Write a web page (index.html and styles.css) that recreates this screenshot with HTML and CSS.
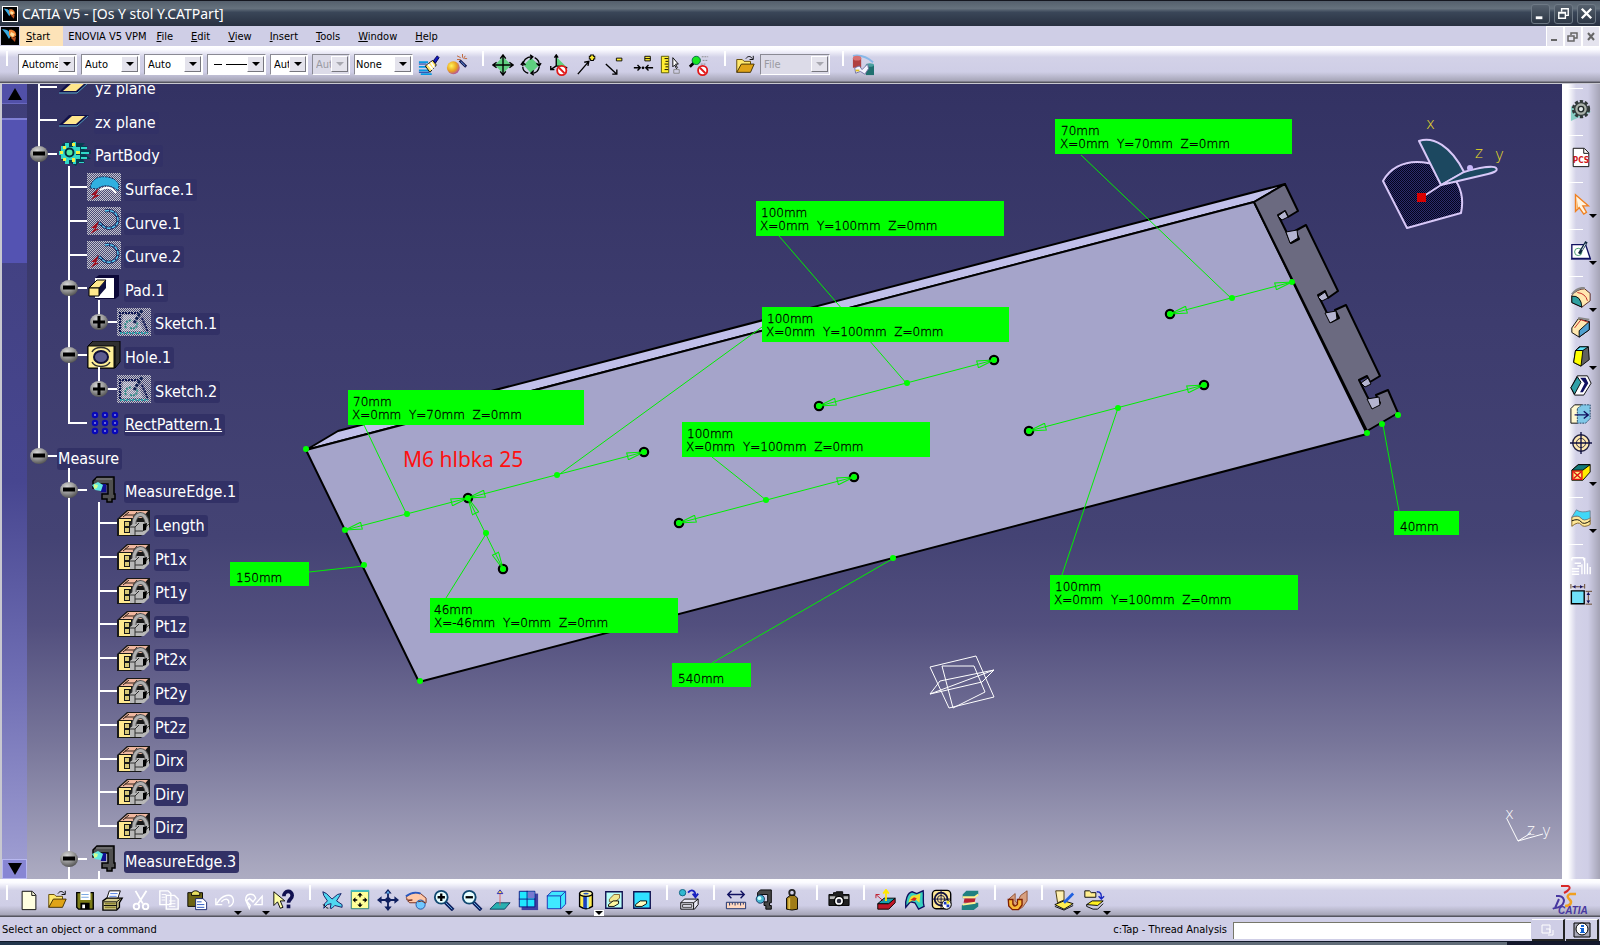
FILE: index.html
```html
<!DOCTYPE html>
<html lang="en">
<head>
<meta charset="utf-8">
<title>CATIA V5 - [Os Y stol Y.CATPart]</title>
<link rel="stylesheet" href="styles.css">
</head>
<body>
<svg class="defs" aria-hidden="true">
  <defs>
    <radialGradient id="ball" cx=".4" cy=".3" r=".75"><stop offset="0" stop-color="#d8d8d8"/><stop offset=".5" stop-color="#9a9a9a"/><stop offset="1" stop-color="#4c4c4c"/></radialGradient>
    <radialGradient id="gold" cx=".35" cy=".35" r=".7"><stop offset="0" stop-color="#fff45a"/><stop offset=".6" stop-color="#e8a020"/><stop offset="1" stop-color="#b050a0"/></radialGradient>
    <pattern id="dots" width="2" height="2" patternUnits="userSpaceOnUse"><rect width="2" height="2" fill="#4b4b78"/><path d="M0 0h1v1H0zM1 1h1v1H1z" fill="#c4c4cc"/></pattern>
    <pattern id="dark" width="2" height="2" patternUnits="userSpaceOnUse"><rect width="2" height="2" fill="#2c2c6c"/><path d="M0 0h1v1H0zM1 1h1v1H1z" fill="#04041c"/></pattern>
  </defs>
  <symbol id="app" viewBox="0 0 18 18"><path fill="#000" d="M0 0h18v18H0z"/><path d="M1 2l5 1 5 4-3 5-3-5z" fill="#38a8e0"/><path d="M8 3c4-1 8 2 7 6l-4 2-3-3z" fill="#f08030"/><path d="M10 5l4 2-2 3-3-2z" fill="#ffe0a0"/><path d="M10 11l5-1-1 5z" fill="#b85020"/></symbol>
  <symbol id="minus" viewBox="0 0 20 18"><ellipse cx="10" cy="9" rx="9" ry="8" fill="url(#ball)"/><path d="M4 6.500h12v4H4z" fill="#000"/></symbol>
  <symbol id="plus" viewBox="0 0 20 18"><ellipse cx="10" cy="9" rx="9" ry="8" fill="url(#ball)"/><path d="M4 7.500h12v3H4zM8.500 3h3v12h-3z" fill="#000"/></symbol>

  <symbol id="t-plane" viewBox="0 0 34 28"><path d="M2 19L12 9h20L21 19z" fill="#101048"/><path d="M6 18l9-8h13l-9 8z" fill="#ffe68c"/><path d="M2 20h18L31 10" fill="none" stroke="#50a0c0"/></symbol>
  <symbol id="t-body" viewBox="0 0 34 28"><path d="M5 4l5-2 3 1 3-3 4 3h8l-3 3h6l-4 4h8v4h-7l6 5h-8l2 4h-7l-2 3-5-3-5 1-2-3-3-2 2-4-3-4 3-3z" fill="#063c50"/><path d="M4 6h4V3h4v4h4V2h3v5h4v4h-4v4h4v4h-4v5h-3v-4h-4v4H8v-5H4v-4H2v-4h2zM24 7h6v2h-6zM24 12h8v2h-8zM24 17h6v2h-6zM22 22h5v1h-5z" fill="#30d8c8"/><path d="M6 6h3v3H6zM15 3h3v3h-3zM3 11h3v3H3zM19 11h4v3h-4zM6 18h3v3H6zM15 18h3v4h-3z" fill="#f0f040"/><circle cx="12.500" cy="12.500" r="4" fill="#50e8a0" stroke="#003040" stroke-width="2"/></symbol>
  <symbol id="t-surface" viewBox="0 0 34 28"><path d="M0 0h34v28H0z" fill="url(#dots)"/><path d="M3 15C5 5 12 3 20 4s11 5 12 8l-1 6c-6-6-15-7-21-2z" fill="#30b0e0" stroke="#103060" stroke-dasharray="2 1"/><path d="M13 17q7-4 12-1l4 4" fill="none" stroke="#fff" stroke-width="2"/><path d="M12 15L4 22h4l-4 5 9-5H9z" fill="#a01020"/></symbol>
  <symbol id="t-curve" viewBox="0 0 34 28"><path d="M0 0h34v28H0z" fill="url(#dots)"/><path d="M18 4c9-2 13 4 13 9s-5 9-11 8-5-6-10-5" fill="none" stroke="#101850" stroke-width="3"/><path d="M18 4c9-2 13 4 13 9s-5 9-11 8-5-6-10-5" fill="none" stroke="#58c8f0" stroke-width="1.500" stroke-dasharray="4 1"/><path d="M12 14L4 21h4l-5 6 9-5H9z" fill="#a01020"/></symbol>
  <symbol id="t-pad" viewBox="0 0 34 28"><path d="M8 4l4-3h20v21l-4 3H8z" fill="#0c0838"/><path d="M8 4h19v20H8z" fill="#fff"/><path d="M2 14l8-8h9l-7 8z" fill="#ffe88c" stroke="#000"/><path d="M12 14l7-8v8l-7 8z" fill="#101040"/><path d="M2 14h10v8H2z" fill="#ffe88c" stroke="#000"/></symbol>
  <symbol id="t-sketch" viewBox="0 0 34 28"><path d="M0 0h34v28H0z" fill="url(#dots)"/><path d="M3 24V5h18M25 10l6 14" fill="none" stroke="#0c1450" stroke-width="2" stroke-dasharray="2 1"/><path d="M6 7h14l6 16H5z" fill="#fff" opacity=".35"/><path d="M3 25h28" stroke="#30a0a8" stroke-width="2" stroke-dasharray="2 1"/><path d="M9 20c-3-5 3-9 6-7M13 20c6 2 8-3 7-6" fill="none" stroke="#308c88" stroke-width="2" stroke-dasharray="2 1"/><path d="M17 15L25 2" stroke="#102050" stroke-width="3" stroke-dasharray="3 1"/></symbol>
  <symbol id="t-hole" viewBox="0 0 34 28"><path d="M1 5l5-5h27v21l-5 6H1z" fill="#303030" stroke="#000"/><path d="M28 5v22" stroke="#000"/><path d="M1 5h26v22H1z" fill="#fff098" stroke="#000"/><ellipse cx="14" cy="16" rx="7" ry="6" fill="#5c5c90" stroke="#101038" stroke-width="2"/><path d="M5 11c3-6 15-6 18 0M5 21c3 6 15 6 18 0" fill="none" stroke="#303030" stroke-width="1.500"/></symbol>
  <symbol id="t-pattern" viewBox="0 0 34 28"><g fill="#fff" stroke="#0808b8" stroke-width="2.500"><circle cx="8" cy="6" r="2"/><circle cx="18" cy="6" r="2"/><circle cx="28" cy="6" r="2"/><circle cx="8" cy="14" r="2"/><circle cx="18" cy="14" r="2"/><circle cx="28" cy="14" r="2"/><circle cx="8" cy="22" r="2"/><circle cx="18" cy="22" r="2"/><circle cx="28" cy="22" r="2"/></g></symbol>
  <symbol id="t-clamp" viewBox="0 0 34 28"><path d="M6 5l4-4h17v17h1v5h-3v3h-5v-3h-5v-5h6V8H10v4H6z" fill="#505050" stroke="#000" stroke-width="1.500"/><path d="M9 3h16" stroke="#888"/><path d="M12 8h7v8h-5z" fill="#101090"/><path d="M5 9l6-3 5 3-2 6-6-1z" fill="#60e8e0"/><path d="M7 8l4 1-1 3-3 1z" fill="#d0ff90"/></symbol>
  <symbol id="t-lock" viewBox="0 0 34 28"><path d="M0 10L10 1h23v17L24 27H0z" fill="#181818"/><path d="M3 9l8-7h20l-6 7z" fill="#f0b8a0"/><path d="M8 6h14M12 3l-6 5M20 3l-4 5" stroke="#302018"/><path d="M2 10h12v2H7v12h7v2H2z" fill="#ffe890"/><path d="M8 13h4v4H8zM8 19h4v4H8z" fill="#d8c878"/><path d="M13 17l5-4h14v8l-5 5H13z" fill="#b8b8b8"/><path d="M13 18h5v8M18 18l4-4M26 20l6-5M18 22h8" fill="none" stroke="#303030"/><path d="M17 15c0-12 12-13 13-1" fill="none" stroke="#555" stroke-width="5"/><path d="M17 15c0-12 12-13 13-1" fill="none" stroke="#b0b0b0" stroke-width="3"/><path d="M26 15l4-1-1 7-3 1z" fill="#000"/></symbol>

  <symbol id="brush" viewBox="0 0 24 24"><path d="M1 9h10M1 14h9M1 18h12M3 22h12" stroke="#0898e0" stroke-width="2"/><path d="M1 11h8M1 20h11" stroke="#0830a0"/><path d="M8 13l8-6 4 5-7 8z" fill="#ffe46a" stroke="#000"/><path d="M11 11l5 6M14 9l4 6" stroke="#fff" stroke-width="2"/><path d="M17 7l4-5 2 2-4 6z" fill="#1018c0" stroke="#000048"/></symbol>
  <symbol id="wand" viewBox="0 0 24 24"><circle cx="8" cy="15" r="7" fill="url(#gold)"/><path d="M15 7l7 7" stroke="#101048" stroke-width="3"/><path d="M16 8l5 5" stroke="#70b0ff"/><path d="M12 2l4 2M18 0v4M21 2l-2 3M12 6h4M23 5h-3" stroke="#c06030"/></symbol>
  <symbol id="move" viewBox="0 0 24 24"><path d="M12 3l9 9-9 9-9-9z" fill="#5fd07f"/><path d="M12 1v22M1 12h22M9 5l3-4 3 4M9 19l3 4 3-4M5 9l-4 3 4 3M19 9l4 3-4 3" fill="none" stroke="#000" stroke-width="1.500"/></symbol>
  <symbol id="rot" viewBox="0 0 24 24"><path d="M12 4l9 8-9 9-8-9z" fill="#5fd07f"/><path d="M3 13C3 7 7 3 13 3M11 1l3 2-3 3M16 4c4 2 5 4 5 8M18 10l3 3 2-3M21 14c-1 5-4 7-8 7M15 18l-3 3 3 2M9 21c-4-1-6-4-6-7M1 12l2-3 3 3" fill="none" stroke="#000" stroke-width="1.500"/></symbol>
  <symbol id="axisno" viewBox="0 0 24 24"><path d="M9 3v10l12 2z" fill="#5fd07f"/><path d="M9 13V1M7 4l2-3 2 3M9 13l12 2M9 13l-6 4M3 13v4h4" fill="none" stroke="#000" stroke-width="1.500"/><circle cx="15" cy="18" r="5" fill="#fff" stroke="#e01818" stroke-width="2"/><path d="M12 15l6 6" stroke="#e01818" stroke-width="2"/></symbol>
  <symbol id="arrp" viewBox="0 0 24 24"><path d="M2 22L14 8M9 9l5-1-1 5" fill="none" stroke="#000" stroke-width="1.500"/><path d="M14 4h7M17.500 .5v7" stroke="#000" stroke-width="4"/><path d="M15 4h5M17.500 1.500v5" stroke="#ffee30" stroke-width="2"/></symbol>
  <symbol id="arrm" viewBox="0 0 24 24"><path d="M2 11l12 11M14 17v5H9" fill="none" stroke="#000" stroke-width="1.500"/><path d="M13.500 4.500h6v3h-6z" fill="#ffee30" stroke="#000"/></symbol>
  <symbol id="arre" viewBox="0 0 24 24"><path d="M2 15h7M15 15h8M6 12l3 3-3 3M18 12l-3 3 3 3" fill="none" stroke="#000" stroke-width="1.500"/><circle cx="12" cy="15" r="1.500"/><path d="M14 2.500h6v5h-6z" fill="#ffee30" stroke="#000"/><path d="M14 5h6" stroke="#000"/></symbol>
  <symbol id="ruler" viewBox="0 0 24 24"><path d="M1.500 2.500h8v18h-8z" fill="#ffee30" stroke="#555500"/><path d="M5 5h4M6 8h3M5 11h4M6 14h3M5 17h4" stroke="#000"/><path d="M14 4v10l2-2 2 4 1-1-2-4h3z" fill="#fff" stroke="#000"/><path d="M15 17h6v4h-6z" fill="none" stroke="#888"/></symbol>
  <symbol id="magno" viewBox="0 0 24 24"><path d="M2 14l5-5" stroke="#000" stroke-width="3"/><circle cx="9" cy="7" r="4.500" fill="#18e820" stroke="#064"/><path d="M15 3h7M16 7h5M14 11h5" stroke="#888" stroke-dasharray="2 1"/><circle cx="16" cy="18" r="5" fill="#fff" stroke="#e01818" stroke-width="2"/><path d="M13 15l6 6" stroke="#e01818" stroke-width="2"/></symbol>
  <symbol id="open" viewBox="0 0 24 24"><path d="M3 20V6h6l2 2h7v4" fill="#ffe86c" stroke="#5c4400"/><path d="M3 20l5-9h14l-4 9z" fill="#e0a418" stroke="#3c2c00"/><path d="M13 5c2-3 5-3 7 0M21 2v4h-4" fill="none" stroke="#000"/></symbol>
  <symbol id="people" viewBox="0 0 24 24"><path d="M1 2q12-2 22 7" stroke="#88b8e8" fill="none" stroke-width="2"/><path d="M1 4h9v11H1z" fill="#b04040"/><ellipse cx="5.500" cy="4.500" rx="4.500" ry="2.500" fill="#d87070"/><path d="M15 12h9v11h-9z" fill="#207070"/><ellipse cx="19.500" cy="12" rx="4.500" ry="2" fill="#48a0a0"/><path d="M3 15l5-2 3 4 6-6 1 5-4 6-5-3-5 2z" fill="#f4f4ff" stroke="#7070a0"/><path d="M4 17h4v2H4z" fill="#e0c020"/></symbol>

  <symbol id="new" viewBox="0 0 24 24"><path d="M4.500 2.500h11l4 4v16h-15z" fill="#ffffe0" stroke="#000"/><path d="M15 3v4h4" fill="none" stroke="#000"/></symbol>
  <symbol id="save" viewBox="0 0 24 24"><path d="M3 4h18v18H5l-2-2z" fill="#7c7c18" stroke="#000" stroke-width="1.500"/><path d="M7 3h11v9H7z" fill="#fff"/><path d="M8 6h8M8 9h8" stroke="#70a0e0"/><path d="M7 15h10v7H7z" fill="#000"/><path d="M9 17h3v4H9z" fill="#fff"/></symbol>
  <symbol id="print" viewBox="0 0 24 24"><path d="M8 2h12l-3 9H5z" fill="#fff" stroke="#000"/><path d="M9 5h8M8 8h8" stroke="#4878e0"/><path d="M1 13l4-3h17l-3 5v5l-3 3H1z" fill="#d8d090" stroke="#000" stroke-width="1.500"/><path d="M2 14h14l4-3M2 18h14M16 14v8" fill="none" stroke="#000"/><path d="M3 16h12M3 20h12" stroke="#8c8430" stroke-width="2"/></symbol>
  <symbol id="cut" viewBox="0 0 24 24"><path d="M6 2l8 14M18 2L9 16" stroke="#fff" stroke-width="2"/><circle cx="7" cy="19" r="3" fill="none" stroke="#fff" stroke-width="2"/><circle cx="17" cy="19" r="3" fill="none" stroke="#fff" stroke-width="2"/></symbol>
  <symbol id="copy" viewBox="0 0 24 24"><path d="M2 2h9l3 3v12H2zM9 7h9l4 4v11H9z" fill="#d4d3e8" stroke="#fff" stroke-width="1.500"/><path d="M4 6h5M4 9h4M4 12h4M12 13h7M12 16h7M12 19h7" stroke="#fff"/></symbol>
  <symbol id="paste" viewBox="0 0 24 24"><path d="M2 4h16v15H2z" fill="#6c6414" stroke="#000"/><path d="M6 5c1-4 8-4 9 0v2H6z" fill="#e8e060" stroke="#000"/><path d="M10.500 10.500h8l4 4v8h-12z" fill="#fff" stroke="#102068"/><path d="M12 14h5M12 17h8M12 20h8" stroke="#2050c0"/></symbol>
  <symbol id="undo" viewBox="0 0 24 24"><path d="M2 10v7h7M3 16c6-10 16-12 18-5 1 4-2 8-5 8M8 14c5-5 9-3 8 2" fill="none" stroke="#fff" stroke-width="1.500"/></symbol>
  <symbol id="redo" viewBox="0 0 24 24"><path d="M22 8v9h-8zM4 12c0-8 9-8 11-2l-3 4-4-4-3 3 4 5-1 3z" fill="none" stroke="#fff" stroke-width="1.500"/></symbol>
  <symbol id="help" viewBox="0 0 24 24"><path d="M2 3v15l4-4 3 7 3-1-3-7h5z" fill="#ffffa8" stroke="#000"/><path d="M13 8c0-7 9-7 9-1 0 4-4 4-4 8" fill="none" stroke="#101050" stroke-width="4"/><path d="M16 17h4v4h-4z" fill="#101050"/></symbol>
  <symbol id="fly" viewBox="0 0 24 24"><path d="M2 3l4 2 6 6 6-5 4-1-5 8 6 4v3l-8-2-3 3h-2l1-5-4 1-4 4 1-5 3-3-4-6z" fill="#50d8f0" stroke="#101860"/><path d="M2 17c3 1 3 4 6 4" fill="none" stroke="#000"/></symbol>
  <symbol id="fit" viewBox="0 0 24 24"><path d="M2.500 2.500h19v19h-19z" fill="#ffff98" stroke="#207878"/><path d="M2 2h20" stroke="#40c0c0" stroke-width="2"/><path d="M12 6v3M12 15v3M6 12h3M15 12h3" stroke="#000" stroke-width="1.500"/><path d="M12 4l-3 3h6zM12 20l-3-3h6zM4 12l3-3v6zM20 12l-3-3v6z"/></symbol>
  <symbol id="pan" viewBox="0 0 24 24"><path d="M12 4v16M4 12h16" stroke="#102060" stroke-width="2"/><circle cx="12" cy="12" r="3" fill="#102060"/><path d="M12 0L8 5h8zM12 24l-4-5h8zM0 12l5-4v8zM24 12l-5-4v8z" fill="#102060"/><path d="M12 2l-2 3h4z" fill="#60b0f0"/></symbol>
  <symbol id="spin" viewBox="0 0 24 24"><path d="M1 9c5-5 11-6 16-4l6 5v5l-6 3-4-3H5l-2-2 5-1H2v-2z" fill="#ffc8a8" stroke="#702818"/><path d="M1 8c5-4 11-5 16-3" fill="none" stroke="#2858c0" stroke-width="2"/><circle cx="17" cy="17" r="5" fill="#70c8ff" stroke="#2050a0"/><path d="M14 14q4-2 8 1" stroke="#702818" fill="none"/></symbol>
  <symbol id="zin" viewBox="0 0 24 24"><path d="M13 14l9 9" stroke="#102060" stroke-width="4"/><path d="M14 15l7 7" stroke="#70c0f0"/><circle cx="9" cy="9" r="7" fill="#e8ffff" stroke="#104870" stroke-width="2"/><path d="M5 9h8M9 5v8" stroke="#000" stroke-width="2.500"/></symbol>
  <symbol id="zout" viewBox="0 0 24 24"><path d="M13 14l9 9" stroke="#102060" stroke-width="4"/><path d="M14 15l7 7" stroke="#70c0f0"/><circle cx="9" cy="9" r="7" fill="#e8ffff" stroke="#104870" stroke-width="2"/><path d="M5 9h8" stroke="#000" stroke-width="2.500"/></symbol>
  <symbol id="normal" viewBox="0 0 24 24"><path d="M1 22l7-7h15l-6 7z" fill="#28b0b0" stroke="#104060"/><path d="M12 18V5" stroke="#e06060"/><path d="M12 1l-3 4h6z" fill="#ffe040" stroke="#2020c0"/></symbol>
  <symbol id="views" viewBox="0 0 24 24"><path d="M5 5h18v18H5z" fill="#4040a0"/><path d="M2.500 2.500h17v17h-17z" fill="#20e8ff" stroke="#101080"/><path d="M11 2v18M2 11h18" stroke="#101080"/><path d="M12 3h7v7h-7z" fill="#7878d0"/></symbol>
  <symbol id="cube" viewBox="0 0 24 24"><path d="M2.500 7.500l5-5h15v14l-5 5h-15z" fill="#40e8ff" stroke="#1828b0"/><path d="M2 7.500h15v14M17 8l5-5" fill="none" stroke="#1828b0"/></symbol>
  <symbol id="cyl" viewBox="0 0 24 24"><path d="M5 5v14q7 5 14 0V5z" fill="#ffee50" stroke="#000" stroke-width="1.500"/><path d="M9 7v14h4V7z" fill="#1840c0"/><path d="M13 8v13h2V8z" fill="#a0e8ff"/><ellipse cx="12" cy="5" rx="7" ry="3" fill="#fff8a0" stroke="#000" stroke-width="1.500"/><ellipse cx="12" cy="5" rx="3" ry="1" fill="#2050c0"/></symbol>
  <symbol id="hide" viewBox="0 0 24 24"><path d="M3 3h18v18H3z" fill="#b8fff8" stroke="#101050" stroke-width="1.500"/><path d="M7 11l5-5h6v4l-5 4H7z" fill="#f0e890" stroke="#806030"/><path d="M6 17l5-4h6v3l-5 3H6z" fill="#fff8a0" stroke="#000"/></symbol>
  <symbol id="swap" viewBox="0 0 24 24"><path d="M3 3h18v18H3z" fill="#30e0ff" stroke="#101050" stroke-width="1.500"/><path d="M5 17l5-4h7v3l-5 3H5z" fill="#ffffc0" stroke="#000"/></symbol>
  <symbol id="tree" viewBox="0 0 24 24"><circle cx="5" cy="4" r="3.500" fill="#30b8d0" stroke="#106080"/><path d="M11 4c3-4 8-3 8 3M16 5l3 4 3-4" fill="none" stroke="#1820c0" stroke-width="2"/><path d="M3 15l4-4h15v6l-4 5H3zM3 15h14v7M17 15l5-4" fill="#e8e8f4" stroke="#000"/><path d="M5 17h10v3H5z" fill="none" stroke="#333"/></symbol>
  <symbol id="meas" viewBox="0 0 24 24"><path d="M3 6h18M7 2L3 6l4 4M17 2l4 4-4 4" fill="none" stroke="#101060" stroke-width="1.500"/><path d="M1.500 14.500h21v7h-21z" fill="#ffd8c0" stroke="#102868"/><path d="M5 15v3M8 15v2M11 15v3M14 15v2M17 15v3M20 15v2" stroke="#102868"/></symbol>
  <symbol id="item" viewBox="0 0 24 24"><path d="M5 4l3-3h12v14h-2v3h2v4h-6v-4h-2v-4h4V6H8v3H5z" fill="#484848" stroke="#000"/><circle cx="8" cy="11" r="4.500" fill="#48b8d0" stroke="#103060"/><circle cx="7" cy="10" r="2" fill="#d0ffff"/></symbol>
  <symbol id="mass" viewBox="0 0 24 24"><circle cx="12" cy="4" r="3" fill="none" stroke="#222" stroke-width="2"/><path d="M6 10l4-3h5l3 3v12q-6 2-12 0z" fill="#a07c18" stroke="#000"/><path d="M9 10v12" stroke="#e0c050" stroke-width="2"/></symbol>
  <symbol id="cam" viewBox="0 0 24 24"><path d="M1 6h5V4h3V3h7v3h7v12H1z" fill="#202020" stroke="#000"/><path d="M2 8h6v3H2zM17 8h5v3h-5z" fill="#b8b8b8"/><circle cx="12" cy="13" r="5" fill="#fff" stroke="#000" stroke-width="1.500"/><circle cx="12" cy="13" r="2.500" fill="#303040"/></symbol>
  <symbol id="draft" viewBox="0 0 24 24"><path d="M3 16h11l8-6v5l-7 7H3z" fill="#c01828" stroke="#000"/><path d="M3 16l7-6h12l-7 6z" fill="#18a0b0" stroke="#000"/><path d="M12 13V2M9 5l3-4 3 4" stroke="#ffe800" stroke-width="2" fill="none"/><path d="M9 13L1 6M1 10V6h4" stroke="#c01828" fill="none"/></symbol>
  <symbol id="curv" viewBox="0 0 24 24"><path d="M3 20C2 12 5 4 10 3l5 2 7-3c1 8-1 12 1 17l-6 3-4-7-5-1z" fill="#38d0c0" stroke="#101060" stroke-width="1.500"/><path d="M6 15c1-6 4-9 7-8l6-2-1 10-5-4z" fill="#f0e030"/><path d="M8 12l4-3 3 1-2 3z" fill="#e02818"/></symbol>
  <symbol id="tap" viewBox="0 0 24 24"><rect x="1.500" y="1.500" width="20" height="20" rx="4" fill="#ffe898" stroke="#000" stroke-width="1.500"/><circle cx="11" cy="11" r="7" fill="none" stroke="#101040" stroke-width="2"/><circle cx="11" cy="11" r="4" fill="none" stroke="#101040"/><path d="M11 1v20M1 11h20" stroke="#101040"/><circle cx="17" cy="17" r="5" fill="#fff" stroke="#000"/><path d="M14 14h3v3h-3zM17 17h3v3h-3z" fill="#1838c0"/><path d="M17 13h3v3h-3z" fill="#e8e020"/></symbol>
  <symbol id="wall" viewBox="0 0 24 24"><path d="M4 6l4-4h13v4l-4 4H4zM3 18l4-3h14v4l-5 4H3z" fill="#208080"/><path d="M6 10h12l-1 5H5z" fill="#b82030"/><path d="M4 9h13l4-3M4 17l14-2" stroke="#fff090" fill="none" stroke-width="2"/></symbol>
  <symbol id="slice" viewBox="0 0 24 24"><path d="M3 11l7-6v8l2 2 4-8 7-5v11l-5 7-4 2z" fill="#d8a080" stroke="#905030"/><path d="M2.500 11.500h5v5q2 4 5 0v-5h5v6l-4 5H7l-4-4z" fill="#f8b838" stroke="#802000" stroke-width="1.500"/></symbol>
  <symbol id="cat1" viewBox="0 0 24 24"><path d="M3 2h9v10l-7 3z" fill="#fff0b0" stroke="#403000"/><path d="M2 17l10-4 10 3-10 6z" fill="#ffee50" stroke="#000"/><path d="M2 19l10 4 10-5" stroke="#000" fill="none"/><path d="M12 15l10-10" stroke="#2060e0" stroke-width="3"/></symbol>
  <symbol id="cat2" viewBox="0 0 24 24"><path d="M2 9V2h5l2 2h5v5z" fill="#ffee90" stroke="#000"/><path d="M15 3c5 0 5 3 5 7M17 8l3 3 3-3" fill="none" stroke="#1828c0" stroke-width="1.500"/><path d="M4 17l6-4h12l-6 5z" fill="#fff020" stroke="#000"/><path d="M4 17v2l7 3h5l6-6" fill="none" stroke="#000"/></symbol>

  <symbol id="gear" viewBox="0 0 24 24"><path d="M1 8v16l22-10z" fill="#70c8b8" opacity=".8"/><circle cx="12" cy="11" r="8.500" fill="none" stroke="#303838" stroke-width="3" stroke-dasharray="3.500 2"/><circle cx="12" cy="11" r="7" fill="#a8b0a8" stroke="#303838" stroke-width="1.500"/><circle cx="12" cy="11" r="3" fill="#e0e8e8" stroke="#202828" stroke-width="1.500"/></symbol>
  <symbol id="pcs" viewBox="0 0 24 24"><path d="M3.500 2.500h12l5 5v15h-17z" fill="#fff" stroke="#000"/><path d="M15 3v5h5" fill="none" stroke="#000"/><text x="12" y="18" text-anchor="middle" class="pcs">PCS</text></symbol>
  <symbol id="select" viewBox="0 0 24 24"><path d="M6 2v18l4-4 5 7 3-2-4-7h6z" fill="#fff4e0" stroke="#f08020" stroke-width="1.500"/><path d="M7 4v14l2-2z" fill="#f8b060"/></symbol>
  <symbol id="skt" viewBox="0 0 24 24"><path d="M22 20L17 5H2v15z" fill="#fff" stroke="#101060" stroke-width="1.500"/><path d="M1 21h22" stroke="#101060"/><circle cx="9" cy="13" r="4" fill="none" stroke="#409868"/><path d="M10 15l8-13" stroke="#102840" stroke-width="3"/><path d="M13 11l4-7" stroke="#e8f8ff"/></symbol>
  <symbol id="fillet" viewBox="0 0 24 24"><path d="M2 9q6-7 14-7l6 5v8l-9 7L2 17z" fill="#ffe8b0" stroke="#502020"/><path d="M2 10q10-1 11 12L2 17z" fill="#30a0a0" stroke="#000"/><path d="M2 8Q8 0 16 1" stroke="#888" stroke-width="2" fill="none"/><path d="M8 6q9 1 11 9" fill="none" stroke="#c02020"/></symbol>
  <symbol id="chamf" viewBox="0 0 24 24"><path d="M2 13l7-10 12 3v9l-11 8-8-5z" fill="#ffe8b0" stroke="#000"/><path d="M21 6L10 16v7l11-8z" fill="#50a0d0" stroke="#000"/><path d="M5 13L12 4l8 3" fill="none" stroke="#c02020"/><path d="M9 2l12 2" stroke="#888" stroke-width="2"/></symbol>
  <symbol id="drafta" viewBox="0 0 24 24"><path d="M6 6l4-4h10l1 14-9 7-8-4z" fill="#606060" stroke="#000"/><path d="M6 6h8l-2 17-8-4z" fill="#ffff00" stroke="#000"/><path d="M6 6l5-4h9l-6 4z" fill="#60e0f8" stroke="#000"/></symbol>
  <symbol id="shell" viewBox="0 0 24 24"><path d="M8 2h11l4 8-8 13H5l-4-8z" fill="#fff" stroke="#000"/><path d="M8 3L1 15l4 7 7-13z" fill="#30a0a8" stroke="#000"/><path d="M11 4h6l3 6-6 10h-3l5-10z" fill="#101060"/></symbol>
  <symbol id="thick" viewBox="0 0 24 24"><path d="M1 6l4-4h8v16l-5 4H1z" fill="#fff8d0" stroke="#000"/><path d="M8 6l5-4h9v15l-5 5H8z" fill="#80c8e8" stroke="#204060" stroke-dasharray="2 1"/><path d="M5 13h14M15 9l5 4-5 4" fill="none" stroke="#101060" stroke-width="1.500"/></symbol>
  <symbol id="thread" viewBox="0 0 24 24"><circle cx="12" cy="12" r="9" fill="#ffe8b0" stroke="#202040" stroke-width="1.500"/><circle cx="12" cy="12" r="5" fill="none" stroke="#202040"/><path d="M12 0v24M0 12h24" stroke="#101040" stroke-width="1.500"/></symbol>
  <symbol id="remove" viewBox="0 0 24 24"><path d="M2 10l7-6h13v8l-8 9H2z" fill="#ffee00" stroke="#000"/><path d="M2 10l7-6h13l-8 6z" fill="#107878" stroke="#000"/><path d="M3 11h10v9H3z" fill="#ffee80" stroke="#e01010" stroke-width="1.500"/><path d="M4 12l8 7M12 12l-8 7" stroke="#e01010" stroke-width="1.500"/></symbol>
  <symbol id="join" viewBox="0 0 24 24"><path d="M2 10q7-3 10 1t10-1v8q-7 4-10 0t-10 2z" fill="#ffe898" stroke="#806020"/><path d="M2 10l5-8q5 4 15 1v8q-7 4-10 0t-10-1z" fill="#40d8f8" stroke="#708090"/><path d="M2 14q7-3 10 1t10-1" fill="none" stroke="#000"/></symbol>
  <symbol id="grid" viewBox="0 0 24 24"><path d="M2 3h13M2 6V3M15 3v3M2 15h8M2 18h8M2 21h8M13 21V10M16 21V3M19 21V9M22 21v-8M5 9h7M8 12h4" fill="none" stroke="#fff" stroke-width="1.500"/></symbol>
  <symbol id="dims" viewBox="0 0 24 24"><path d="M1.500 7.500h14v14h-14z" fill="#70e0f8" stroke="#000" stroke-width="1.500"/><path d="M1 0v5M16 0v5M2 3h13M17 8h7M17 22h7M20 9v12" stroke="#604020"/><path d="M3 3l3-2v4zM14 3l-3-2v4zM20 9l-2 3h4zM20 21l-2-3h4z" fill="#101060"/></symbol>
</svg>

<header class="titlebar">
  <svg class="app-ico"><use href="#app"/></svg>
  <h1>CATIA V5 - [Os Y stol Y.CATPart]</h1>
  <div class="win-btns">
    <button aria-label="Minimize"><svg viewBox="0 0 18 18"><path d="M4 12h7v3H4z" fill="#fff"/></svg></button>
    <button aria-label="Restore"><svg viewBox="0 0 18 18"><path d="M4 8h7v6H4zM7 7V4h7v7h-3M4 8.500h7" fill="none" stroke="#fff" stroke-width="1.500"/></svg></button>
    <button aria-label="Close"><svg viewBox="0 0 18 18"><path d="M4 4l10 10M14 4L4 14" stroke="#fff" stroke-width="2.500"/></svg></button>
  </div>
</header>

<nav class="menubar">
  <svg class="menu-ico"><use href="#app"/></svg>
  <button class="hot"><u>S</u>tart</button>
  <button class="wide">ENOVIA V5 VPM</button>
  <button><u>F</u>ile</button>
  <button><u>E</u>dit</button>
  <button><u>V</u>iew</button>
  <button><u>I</u>nsert</button>
  <button><u>T</u>ools</button>
  <button><u>W</u>indow</button>
  <button><u>H</u>elp</button>
  <div class="mdi">
    <button aria-label="Minimize document"><svg viewBox="0 0 16 16"><path d="M4 10h6v2H4z" fill="#666"/></svg></button>
    <button aria-label="Restore document"><svg viewBox="0 0 16 16"><path d="M3 7h6v5H3zM6 6V4h6v5H9" fill="none" stroke="#666" stroke-width="1.500"/></svg></button>
    <button aria-label="Close document"><svg viewBox="0 0 16 16"><path d="M5 4l6 7M11 4l-6 7" stroke="#666" stroke-width="2"/></svg></button>
  </div>
</nav>

<div class="toolbar top">
  <div class="group combos">
    <span class="combo"><select aria-label="Color"><option>Automatic</option></select><i></i></span>
    <span class="combo"><select aria-label="Transparency"><option>Auto</option></select><i></i></span>
    <span class="combo"><select aria-label="Weight"><option>Auto</option></select><i></i></span>
    <span class="combo"><select aria-label="Line type"><option aria-label="Dashed"></option></select><b class="dash"></b><i></i></span>
    <span class="combo slim"><select aria-label="Point symbol"><option>Auto</option></select><i></i></span>
    <span class="combo slim off"><select aria-label="Rendering" disabled><option>Auto</option></select><i></i></span>
    <span class="combo tight"><select aria-label="Layer"><option>None</option></select><i></i></span>
  </div>
  <div class="group flush">
    <button aria-label="Painter"><svg><use href="#brush"/></svg></button>
    <button aria-label="Wizard"><svg><use href="#wand"/></svg></button>
  </div>
  <div class="group">
    <button aria-label="Translate"><svg><use href="#move"/></svg></button>
    <button aria-label="Rotate"><svg><use href="#rot"/></svg></button>
    <button aria-label="No axis"><svg><use href="#axisno"/></svg></button>
    <button aria-label="Add"><svg><use href="#arrp"/></svg></button>
    <button aria-label="Remove"><svg><use href="#arrm"/></svg></button>
    <button aria-label="Equal"><svg><use href="#arre"/></svg></button>
    <button aria-label="Ruler"><svg><use href="#ruler"/></svg></button>
    <button aria-label="No snap"><svg><use href="#magno"/></svg></button>
  </div>
  <div class="group">
    <button aria-label="Open catalog"><svg><use href="#open"/></svg></button>
    <span class="combo file off"><select aria-label="File" disabled><option>File</option></select><i></i></span>
  </div>
  <div class="group">
    <button aria-label="Collaborate"><svg><use href="#people"/></svg></button>
  </div>
</div>

<main class="work">
  <div class="scroll" role="scrollbar" aria-controls="tree" aria-valuenow="5">
    <button aria-label="Scroll up"><svg viewBox="0 0 14 12"><path d="M7 0l7 12H0z"/></svg></button>
    <div class="thumb"></div>
    <button class="down" aria-label="Scroll down"><svg viewBox="0 0 14 12"><path d="M7 12L0 0h14z"/></svg></button>
  </div>
  <div class="view">
    <svg class="scene" viewBox="0 84 1562 795" preserveAspectRatio="xMidYMid meet">
      <defs>
        <marker id="arr" viewBox="0 0 24 8" refX="24" refY="4" markerWidth="24" markerHeight="8" markerUnits="userSpaceOnUse" orient="auto-start-reverse"><path d="M24 4L7 .5v7z" fill="none" stroke="#00f000"/></marker>
      </defs>
      <g stroke="#000" stroke-width="2" stroke-linejoin="round">
        <path d="M306 450L338 431 1285 184 1254 202z" fill="#c1c0ea"/>
        <path d="M306 450L1254 202 1367 434 419 682z" fill="#a5a4ca"/>
        <path d="M1254 202l31-18 13 27-10 6-3-6-7 4 8 16 5 12 8-4-4-8 11-6 32 66-10 7-3-7-7 4 8 16 5 11 8-4-4-8 11-5 34 71-10 6-3-6-8 4 8 16 6 11 7-4-4-8 12-5 10 23-31 18z" fill="#6b6a80"/>
        <g fill="#b4b4d0" stroke-width="1"><path d="M1278 216l7-5 3 6-6 3zM1286 232l11-2 1 8-8 5zM1318 297l7-5 3 6-6 3zM1325 313l11-2 1 8-7 4zM1361 383l7-5 3 6-6 3zM1367 399l12-2 1 8-8 4z"/></g>
      </g>
      <g fill="none" stroke="#000" stroke-width="2.500">
        <circle cx="468" cy="498" r="4"/><circle cx="644" cy="452" r="4"/><circle cx="503" cy="569" r="4"/>
        <circle cx="819" cy="406" r="4"/><circle cx="994" cy="360" r="4"/><circle cx="679" cy="523" r="4"/><circle cx="854" cy="477" r="4"/>
        <circle cx="1029" cy="431" r="4"/><circle cx="1204" cy="385" r="4"/><circle cx="1170" cy="314" r="4"/>
      </g>
      <g fill="none" stroke="#00f000">
        <g marker-start="url(#arr)" marker-end="url(#arr)">
          <path d="M345 530L468 498"/><path d="M468 498L644 452"/><path d="M468 498l35 71"/><path d="M819 406l175-46"/>
          <path d="M679 523l175-46"/><path d="M1029 431l175-46"/><path d="M1170 314l122-32"/>
        </g>
        <path d="M364 425l43 90M762 327L557 476M446 598l40-64M779 236l128 148M712 457l54 43M1062 575l56-167M1081 155l151 144M309 572l55-6M712 663l182-105M1399 511l-16-86"/>
      </g>
      <g fill="#00ff00">
        <circle cx="345" cy="530" r="3"/><circle cx="407" cy="514" r="3"/><circle cx="468" cy="498" r="3"/><circle cx="557" cy="475" r="3"/><circle cx="644" cy="452" r="3"/><circle cx="486" cy="533" r="3"/><circle cx="503" cy="569" r="3"/>
        <circle cx="819" cy="406" r="3"/><circle cx="907" cy="383" r="3"/><circle cx="994" cy="360" r="3"/><circle cx="679" cy="523" r="3"/><circle cx="766" cy="500" r="3"/><circle cx="854" cy="477" r="3"/>
        <circle cx="1029" cy="431" r="3"/><circle cx="1118" cy="408" r="3"/><circle cx="1204" cy="385" r="3"/><circle cx="1170" cy="314" r="3"/><circle cx="1232" cy="298" r="3"/><circle cx="1292" cy="282" r="3"/>
        <circle cx="306" cy="449" r="3"/><circle cx="420" cy="681" r="3"/><circle cx="364" cy="565" r="3"/><circle cx="893" cy="558" r="3"/><circle cx="1367" cy="433" r="3"/><circle cx="1382" cy="424" r="3"/><circle cx="1398" cy="415" r="3"/>
      </g>
      <g class="dim">
        <g><rect x="348" y="390" width="236" height="35"/><text x="353" y="406">70mm</text><text x="352" y="419">X=0mm  Y=70mm  Z=0mm</text></g>
        <g><rect x="756" y="201" width="248" height="35"/><text x="761" y="217">100mm</text><text x="760" y="230">X=0mm  Y=100mm  Z=0mm</text></g>
        <g><rect x="762" y="307" width="247" height="35"/><text x="767" y="323">100mm</text><text x="766" y="336">X=0mm  Y=100mm  Z=0mm</text></g>
        <g><rect x="682" y="422" width="248" height="35"/><text x="687" y="438">100mm</text><text x="686" y="451">X=0mm  Y=100mm  Z=0mm</text></g>
        <g><rect x="1055" y="119" width="237" height="35"/><text x="1061" y="135">70mm</text><text x="1060" y="148">X=0mm  Y=70mm  Z=0mm</text></g>
        <g><rect x="1050" y="575" width="248" height="35"/><text x="1055" y="591">100mm</text><text x="1054" y="604">X=0mm  Y=100mm  Z=0mm</text></g>
        <g><rect x="430" y="598" width="248" height="35"/><text x="434" y="614">46mm</text><text x="434" y="627">X=-46mm  Y=0mm  Z=0mm</text></g>
        <g><rect x="230" y="562" width="79" height="24"/><text x="236" y="582">150mm</text></g>
        <g><rect x="672" y="663" width="79" height="24"/><text x="678" y="683">540mm</text></g>
        <g><rect x="1394" y="511" width="65" height="24"/><text x="1400" y="531">40mm</text></g>
      </g>
      <text class="note" x="403" y="467">M6 hlbka 25</text>
      <g stroke="#d8c8f8" stroke-width="2" stroke-linejoin="round">
        <path d="M1383 181c7-13 20-19 34-19 30 0 50 22 44 51l-54 15z" fill="url(#dark)"/>
        <path d="M1441 185l-22-44c14-5 32 5 45 31z" fill="#1c4860"/>
        <path d="M1441 185l23-13c14-4 30-7 32-4 3 3-4 5-8 6z" fill="#1c4860"/>
        <path d="M1424 196l17-11"/>
      </g>
      <circle cx="1470" cy="168" r="3" fill="#c8b8f8"/>
      <path d="M1417 193h9v9h-9z" fill="#d80000"/>
      <g class="axis"><text x="1426" y="129">x</text><text x="1475" y="158">z</text><text x="1495" y="160">y</text></g>
      <g fill="none" stroke="#fff">
        <path d="M930 667l46-11 18 41-45 11zM942 666l32 0 11 26-32 16zM930 694l64-24M930 694l10-13 54-11-12 12z"/>
        <path d="M1507 819l11 22 25-7M1518 841l13-8"/>
      </g>
      <g class="axis white"><text x="1505" y="819">x</text><text x="1527" y="835">z</text><text x="1542" y="836">y</text></g>
    </svg>
    <ul class="tree" id="tree">
      <li><i class="v t"></i><svg class="ico"><use href="#t-plane"/></svg><span class="lab">yz plane</span></li>
      <li><i class="v t"></i><svg class="ico"><use href="#t-plane"/></svg><span class="lab">zx plane</span></li>
      <li class="par"><i class="v t"><svg><use href="#minus"/></svg></i><svg class="ico"><use href="#t-body"/></svg><span class="lab">PartBody</span></li>
      <li><i class="v"></i><i class="v t"></i><svg class="ico"><use href="#t-surface"/></svg><span class="lab">Surface.1</span></li>
      <li><i class="v"></i><i class="v t"></i><svg class="ico"><use href="#t-curve"/></svg><span class="lab">Curve.1</span></li>
      <li><i class="v"></i><i class="v t"></i><svg class="ico"><use href="#t-curve"/></svg><span class="lab">Curve.2</span></li>
      <li class="par two"><i class="v"></i><i class="v t"><svg><use href="#minus"/></svg></i><svg class="ico"><use href="#t-pad"/></svg><span class="lab">Pad.1</span></li>
      <li><i class="v"></i><i class="v"></i><i class="e t"><svg><use href="#plus"/></svg></i><svg class="ico"><use href="#t-sketch"/></svg><span class="lab">Sketch.1</span></li>
      <li class="par two"><i class="v"></i><i class="v t"><svg><use href="#minus"/></svg></i><svg class="ico"><use href="#t-hole"/></svg><span class="lab">Hole.1</span></li>
      <li><i class="v"></i><i class="v"></i><i class="e t"><svg><use href="#plus"/></svg></i><svg class="ico"><use href="#t-sketch"/></svg><span class="lab">Sketch.2</span></li>
      <li><i class="v"></i><i class="e t"></i><svg class="ico"><use href="#t-pattern"/></svg><span class="lab under">RectPattern.1</span></li>
      <li class="par bare"><i class="e t"><svg><use href="#minus"/></svg></i><span class="lab">Measure</span></li>
      <li class="par two"><i></i><i class="v t"><svg><use href="#minus"/></svg></i><svg class="ico"><use href="#t-clamp"/></svg><span class="lab">MeasureEdge.1</span></li>
      <li><i></i><i class="v"></i><i class="v t"></i><svg class="ico"><use href="#t-lock"/></svg><span class="lab">Length</span></li>
      <li><i></i><i class="v"></i><i class="v t"></i><svg class="ico"><use href="#t-lock"/></svg><span class="lab">Pt1x</span></li>
      <li><i></i><i class="v"></i><i class="v t"></i><svg class="ico"><use href="#t-lock"/></svg><span class="lab">Pt1y</span></li>
      <li><i></i><i class="v"></i><i class="v t"></i><svg class="ico"><use href="#t-lock"/></svg><span class="lab">Pt1z</span></li>
      <li><i></i><i class="v"></i><i class="v t"></i><svg class="ico"><use href="#t-lock"/></svg><span class="lab">Pt2x</span></li>
      <li><i></i><i class="v"></i><i class="v t"></i><svg class="ico"><use href="#t-lock"/></svg><span class="lab">Pt2y</span></li>
      <li><i></i><i class="v"></i><i class="v t"></i><svg class="ico"><use href="#t-lock"/></svg><span class="lab">Pt2z</span></li>
      <li><i></i><i class="v"></i><i class="v t"></i><svg class="ico"><use href="#t-lock"/></svg><span class="lab">Dirx</span></li>
      <li><i></i><i class="v"></i><i class="v t"></i><svg class="ico"><use href="#t-lock"/></svg><span class="lab">Diry</span></li>
      <li><i></i><i class="v"></i><i class="e t"></i><svg class="ico"><use href="#t-lock"/></svg><span class="lab">Dirz</span></li>
      <li class="par two"><i></i><i class="v t"><svg><use href="#minus"/></svg></i><svg class="ico"><use href="#t-clamp"/></svg><span class="lab">MeasureEdge.3</span></li>
      <li><i></i><i class="v"></i><i class="v t"></i><svg class="ico"><use href="#t-lock"/></svg></li>
    </ul>
  </div>
  <aside class="side">
    <div class="vgroup"><button aria-label="Part Design"><svg><use href="#gear"/></svg></button></div>
    <div class="vgroup"><button aria-label="PCS"><svg><use href="#pcs"/></svg></button></div>
    <div class="vgroup"><button class="drop" aria-label="Select"><svg><use href="#select"/></svg></button></div>
    <div class="vgroup"><button class="drop" aria-label="Sketcher"><svg><use href="#skt"/></svg></button></div>
    <div class="vgroup">
      <button class="drop" aria-label="Edge Fillet"><svg><use href="#fillet"/></svg></button>
      <button aria-label="Chamfer"><svg><use href="#chamf"/></svg></button>
      <button class="drop" aria-label="Draft Angle"><svg><use href="#drafta"/></svg></button>
      <button aria-label="Shell"><svg><use href="#shell"/></svg></button>
      <button aria-label="Thickness"><svg><use href="#thick"/></svg></button>
      <button aria-label="Thread"><svg><use href="#thread"/></svg></button>
      <button class="drop" aria-label="Remove Face"><svg><use href="#remove"/></svg></button>
    </div>
    <div class="vgroup"><button class="drop" aria-label="Surfaces"><svg><use href="#join"/></svg></button></div>
    <div class="vgroup">
      <button aria-label="Constraints in dialog"><svg><use href="#grid"/></svg></button>
      <button aria-label="Constraint"><svg><use href="#dims"/></svg></button>
    </div>
  </aside>
</main>

<div class="toolbar bottom">
  <div class="group">
    <button aria-label="New"><svg><use href="#new"/></svg></button>
    <button aria-label="Open"><svg><use href="#open"/></svg></button>
    <button aria-label="Save"><svg><use href="#save"/></svg></button>
    <button aria-label="Print"><svg><use href="#print"/></svg></button>
    <button aria-label="Cut"><svg><use href="#cut"/></svg></button>
    <button aria-label="Copy"><svg><use href="#copy"/></svg></button>
    <button aria-label="Paste"><svg><use href="#paste"/></svg></button>
    <button class="drop" aria-label="Undo"><svg><use href="#undo"/></svg></button>
    <button class="drop roomy" aria-label="Redo"><svg><use href="#redo"/></svg></button>
    <button aria-label="What's This?"><svg><use href="#help"/></svg></button>
  </div>
  <div class="group">
    <button aria-label="Fly Mode"><svg><use href="#fly"/></svg></button>
    <button aria-label="Fit All In"><svg><use href="#fit"/></svg></button>
    <button aria-label="Pan"><svg><use href="#pan"/></svg></button>
    <button aria-label="Rotate view"><svg><use href="#spin"/></svg></button>
    <button aria-label="Zoom In"><svg><use href="#zin"/></svg></button>
    <button aria-label="Zoom Out"><svg><use href="#zout"/></svg></button>
    <button aria-label="Normal View"><svg><use href="#normal"/></svg></button>
    <button aria-label="Multi-View"><svg><use href="#views"/></svg></button>
    <button class="drop roomy" aria-label="Isometric View"><svg><use href="#cube"/></svg></button>
    <button class="drop lit" aria-label="Shading"><svg><use href="#cyl"/></svg></button>
    <button aria-label="Hide/Show"><svg><use href="#hide"/></svg></button>
    <button aria-label="Swap visible space"><svg><use href="#swap"/></svg></button>
  </div>
  <div class="group"><button aria-label="Graph"><svg><use href="#tree"/></svg></button></div>
  <div class="group">
    <button aria-label="Measure Between"><svg><use href="#meas"/></svg></button>
    <button aria-label="Measure Item"><svg><use href="#item"/></svg></button>
    <button aria-label="Measure Inertia"><svg><use href="#mass"/></svg></button>
  </div>
  <div class="group"><button aria-label="Capture"><svg><use href="#cam"/></svg></button></div>
  <div class="group">
    <button aria-label="Draft Analysis"><svg><use href="#draft"/></svg></button>
    <button aria-label="Curvature Analysis"><svg><use href="#curv"/></svg></button>
    <button aria-label="Tap - Thread Analysis"><svg><use href="#tap"/></svg></button>
    <button aria-label="Wall Thickness"><svg><use href="#wall"/></svg></button>
  </div>
  <div class="group"><button aria-label="Dynamic Sectioning"><svg><use href="#slice"/></svg></button></div>
  <div class="group">
    <button class="drop roomy" aria-label="Create datum"><svg><use href="#cat1"/></svg></button>
    <button class="drop" aria-label="Catalog"><svg><use href="#cat2"/></svg></button>
  </div>
  <svg class="logo" viewBox="0 0 44 34"><path d="M11 3h7c3 1 2 4-4 7" fill="none" stroke="#d82828" stroke-width="2"/><path d="M6 13h3c8 1 6 11-4 12l4-9M4 25l-1 1" fill="none" stroke="#4838a0" stroke-width="2"/><path d="M26 11h-6c-4 2-2 4 0 6s1 6-5 6" fill="none" stroke="#f0a020" stroke-width="2.500"/><text x="8" y="31" class="brand">CATIA</text></svg>
</div>

<footer class="status">
  <span>Select an object or a command</span>
  <label for="cmd">c:Tap - Thread Analysis</label>
  <input id="cmd" type="text">
  <button aria-label="Power input"><svg viewBox="0 0 24 16"><path d="M6 3h8v8H6zM17 8v5h-5M10 7h4v4" fill="none" stroke="#fff"/></svg></button>
  <button aria-label="Information"><svg viewBox="0 0 24 16"><path d="M4 1h16v14H4z" fill="#a8a8b8" stroke="#000"/><circle cx="12" cy="7" r="6" fill="#fff" stroke="#000"/><path d="M11 3h3v2h-3zM10 6h4v4h1v1h-5v-1h1V7h-1z" fill="#1060d0"/></svg></button>
</footer>
<div class="edge"><i></i><b></b></div>
</body>
</html>
```

FILE: styles.css
```css
* { box-sizing: border-box; }
html, body { height: 100%; }
body {
  margin: 0;
  display: flex;
  flex-direction: column;
  background: #cfcee6;
  color: #000;
  font: 11px/14px "DejaVu Sans Condensed", "Noto Sans", sans-serif;
  overflow: hidden;
}
button { border: 0; padding: 0; background: none; color: inherit; font: inherit; }
svg { display: block; }
.defs { position: absolute; width: 0; height: 0; }
.pcs { font: bold 9px "DejaVu Sans Condensed", sans-serif; fill: #d01818; }

/* title bar */
.titlebar {
  flex: none;
  height: 26px;
  display: flex;
  align-items: center;
  gap: 4px;
  padding: 0 4px 0 2px;
  border-top: 1px solid #14161f;
  background: linear-gradient(#545f6c, #65717d 30%, #3a4658 45%, #283040);
}
.app-ico { width: 16px; height: 16px; border: 1px solid #fff; }
.titlebar h1 { margin: 0; flex: 1; color: #fff; font: 400 14px/20px "Noto Sans", sans-serif; }
.win-btns { display: flex; gap: 4px; }
.win-btns button { width: 19px; height: 20px; border: 1px solid #6d7884; border-radius: 3px; background: linear-gradient(#56616e, #2c3644); }

/* menu */
.menubar { flex: none; height: 20px; display: flex; align-items: stretch; background: #cfcee6; }
.menu-ico { width: 18px; height: 18px; margin: 1px 1px 0; }
.menubar > button { padding: 1px 9px 0; }
.menubar > .hot { padding: 1px 13px 0 6px; background: #fde3b8; }
.menubar > .wide { padding: 1px 1px 0 5px; }
.mdi { margin-left: auto; display: flex; gap: 2px; padding: 1px 1px 0; background: #fff; }
.mdi button { width: 16px; background: #e4e3ee; }

/* horizontal toolbars */
.toolbar {
  flex: none;
  height: 37px;
  display: flex;
  align-items: center;
  padding-left: 6px;
  background: linear-gradient(#fff, #fafaff 10%, #d3d2e8 30%, #cfcee6 70%, #a5a4b6 95%, #55555f 97%);
}
.toolbar .group { display: flex; align-items: center; gap: 2px; margin-right: 12px; padding-left: 8px; position: relative; }
.toolbar .group::before { content: ""; position: absolute; left: 0; top: -2px; width: 2px; height: 15px; background: #fff; }
.toolbar.top .group { height: 24px; }
.toolbar .flush { padding-left: 0; }
.toolbar .flush::before { display: none; }
.toolbar .combos { gap: 4px; padding-left: 12px; margin-right: 3px; }
.toolbar button { position: relative; width: 26px; height: 26px; display: grid; place-items: center; }
.toolbar button svg, .side button svg { width: 22px; height: 22px; }
.drop::after {
  content: "";
  position: absolute;
  right: -4px;
  bottom: -2px;
  border: 4px solid transparent;
  border-top-color: #000;
  border-bottom: 0;
}
.lit::after { box-shadow: 0 0 0 1px #fff; background: #fff; }
.combo { position: relative; display: block; width: 59px; height: 21px; border: 1px solid #8a8a94; border-right-color: #fff; border-bottom-color: #fff; background: #fff; }
.combo.slim { width: 38px; }
.combo.file { width: 70px; }
.combo select {
  appearance: none;
  display: block;
  width: 100%;
  height: 19px;
  border: 0;
  padding: 0 18px 0 3px;
  background: transparent;
  color: #000;
  font: inherit;
  outline: 0;
}
.combo.tight select { padding-left: 1px; }
.combo.off { background: #dcdbe8; }
.combo.off select { color: #9a9aa2; opacity: 1; }
.combo > i {
  position: absolute;
  right: 1px;
  top: 1px;
  width: 17px;
  height: 16px;
  border: 1px solid #fff;
  border-right-color: #77777f;
  border-bottom-color: #77777f;
  background: #e4e3ec;
  pointer-events: none;
}
.combo > i::after { content: ""; position: absolute; left: 4px; top: 5px; border: 4px solid transparent; border-top-color: #000; border-bottom: 0; }
.combo.off > i::after { border-top-color: #a8a8b0; }
.dash { position: absolute; left: 6px; top: 9px; width: 34px; height: 1px; background: linear-gradient(90deg, #000 8px, transparent 8px 12px, #000 12px); }
.toolbar.bottom { height: 38px; padding-top: 4px; }
.toolbar.bottom .group { margin-right: 11px; padding-left: 10px; }
.toolbar.bottom .group:first-child { margin-right: 13px; }
.toolbar.bottom .roomy { margin-right: 2px; }
.toolbar .logo { margin-left: auto; width: 44px; height: 34px; margin-right: 6px; }
.brand { font: italic bold 10px "Liberation Sans", sans-serif; fill: #4838a0; }

/* work area */
.work { flex: 1; min-height: 0; display: flex; border-top: 1px solid #c8c8d0; }
.scroll {
  flex: none;
  width: 27px;
  display: flex;
  flex-direction: column;
  border-left: 2px solid #c8c8d0;
  background: linear-gradient(#3f3e78, #474690 50%, #6f6eb4 75%, #a2a1d4);
}
.scroll button { height: 20px; display: grid; place-items: center; background: #5150a8; border-bottom: 1px solid #6a69c0; }
.scroll button svg { width: 14px; height: 12px; }
.scroll .thumb { margin-top: 14px; height: 145px; background: #5453b2; border-top: 2px solid #8080d4; }
.scroll .down { margin-top: auto; background: #8786d4; border: 1px solid #b8b8f0; }
.view {
  flex: 1;
  min-width: 0;
  position: relative;
  overflow: hidden;
  background: linear-gradient(#333263, #3d3c6e 30%, #444374 57%, #524f7e 68%, #78769a 83%, #adacc2);
}
.scene { position: absolute; right: 0; top: 0; width: calc(100% + 27px); height: 100%; }
.dim rect { fill: #00ff00; }
.dim text { fill: #000; stroke: #000; stroke-width: 0.3px; font: 200 12px "DejaVu Sans", "Noto Sans", sans-serif; white-space: pre; }
.note { fill: #ff1010; font: 21px "Noto Sans", sans-serif; }
.axis { fill: #f0e020; font: 200 15px "DejaVu Sans", "Noto Sans", sans-serif; }
.axis.white { fill: #fff; }

/* specification tree */
.tree { position: relative; list-style: none; margin: -14px 0 0 -3px; padding: 0; font-size: 16px; line-height: 22px; color: #fff; }
.tree li { display: flex; align-items: center; height: 34px; position: relative; }
.tree li:nth-child(5n+1), .tree li:nth-child(5n+3) { height: 33px; }
.tree i { position: relative; width: 30px; align-self: stretch; display: grid; place-items: center; }
.tree .v { background: linear-gradient(#fff, #fff) 50% 0 / 2px 100% no-repeat; }
.tree .e { background: linear-gradient(#fff, #fff) 50% 0 / 2px 18px no-repeat; }
.tree .t::before { content: ""; position: absolute; left: 15px; right: -3px; top: 16px; height: 2px; background: #fff; }
.tree i svg { position: relative; width: 20px; height: 18px; }
.tree .ico { width: 34px; height: 28px; margin-left: 3px; }
.tree .par::after { content: ""; position: absolute; left: 44px; top: 29px; bottom: 0; width: 2px; background: #fff; }
.tree .two::after { left: 74px; }
.lab { margin: 5px 0 0 3px; padding: 0 3px 0 1px; border-radius: 3px; background: #323166; }
.under { text-decoration: underline; }

/* vertical toolbar */
.side { flex: none; width: 38px; padding-top: 4px; background: linear-gradient(90deg, #fff, #fff 6px, #d3d2e8 14px, #cfcee6 26px, #a5a4b6); }
.vgroup { display: flex; flex-direction: column; gap: 3px; align-items: center; padding: 9px 0 12px; background: linear-gradient(#fff, #fff) 5px 0 / 16px 1px no-repeat; }
.side button { position: relative; width: 26px; height: 26px; display: grid; place-items: center; }
.side .drop::after { right: -3px; bottom: -1px; }

/* status bar */
.status { flex: none; height: 24px; display: flex; align-items: center; padding: 2px 1px 0 2px; gap: 1px; }
.status label { margin: 0 5px 0 auto; }
.status input { width: 298px; height: 17px; border: 1px solid #77776a; border-right: 0; border-bottom: 0; padding: 0 4px; background: #fff; font: inherit; }
.status button { width: 33px; height: 22px; display: grid; place-items: center; border-right: 2px solid #222; border-bottom: 2px solid #222; border-top: 1px solid #fff; }
.status button svg { width: 24px; height: 16px; }
.edge { flex: none; height: 4px; display: flex; border-top: 1px solid #101828; background: #626d79; }
.edge i { width: 90px; background: #22364c; }
.edge b { width: 93px; margin-left: auto; background: #14182c; }
```
